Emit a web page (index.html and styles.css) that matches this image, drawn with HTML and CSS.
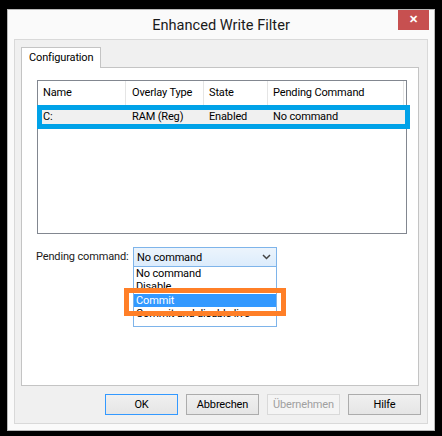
FILE: index.html
```html
<!DOCTYPE html>
<html>
<head>
    <meta charset="utf-8" />
    <title>Enhanced Write Filter</title>
    <link rel="stylesheet" href="styles.css">
</head>
<body>
    <div class="window">
        <div class="titlebar">
            <span></span>
            <span class="title">Enhanced Write Filter</span>
            <span class="close">&#x2715;</span>
        </div>
        <div class="panel">
            <div class="tabs">
                <span class="tab">Configuration</span>
            </div>
            <div class="tabpage">
                <div class="listview">
                    <div class="lv-head">
                        <span class="c1">Name</span>
                        <span class="c2">Overlay Type</span>
                        <span class="c3">State</span>
                        <span class="c4">Pending Command</span>
                    </div>
                    <div class="lv-row">
                        <span class="c1">C:</span>
                        <span class="c2">RAM (Reg)</span>
                        <span class="c3">Enabled</span>
                        <span class="c4">No command</span>
                    </div>
                    <!-- markierung -->
                    <div class="mark mark-blue"></div>
                </div>
                <div class="pending">
                    <span class="label">Pending command:</span>
                    <div class="combo-wrap">
                        <div class="combo">
                            <span>No command</span>
                            <svg class="chev" width="9" height="6" viewBox="0 0 9 6"><path d="M1 1 L4.5 4.5 L8 1" fill="none" stroke="#444" stroke-width="1.5"/></svg>
                        </div>
                        <ul class="droplist">
                            <li>No command</li>
                            <li>Disable</li>
                            <li class="sel">Commit</li>
                            <li>Commit and disable live</li>
                        </ul>
                        <div class="mark mark-orange"></div>
                    </div>
                </div>
            </div>
            <div class="buttons">
                <button class="btn default">OK</button>
                <button class="btn">Abbrechen</button>
                <button class="btn" disabled>Übernehmen</button>
                <button class="btn">Hilfe</button>
            </div>
        </div>
    </div>
</body>
</html>
```

FILE: styles.css
```css
body {
    margin: 0;
    padding: 9px 0 0 7px;
    background-color: #000;
    font-family: Roboto, "Noto Sans", Arial, sans-serif;
    font-size: 11px;
    letter-spacing: -0.15px;
    color: #000;
    white-space: nowrap;
}

.window {
    width: 428px;
    height: 422px;
    box-sizing: border-box;
    border: 1px solid #b9b9b9;
    background-color: #fafafa;
}

.titlebar {
    display: grid;
    grid-template-columns: 1fr auto 1fr;
    height: 29px;
}

.title {
    font-size: 14.6px;
    letter-spacing: 0;
    color: #1a1a1a;
    line-height: 29px;
    padding-top: 1px;
}

.close {
    justify-self: end;
    width: 31px;
    height: 20px;
    margin-right: 5px;
    background-color: #c75050;
    color: #fff;
    font-size: 11px;
    font-weight: bold;
    text-align: center;
    line-height: 20px;
}

.panel {
    margin-left: 6px;
    width: 414px;
    height: 385px;
    box-sizing: border-box;
    border: 1px solid #d9d9d9;
    background-color: #f0f0f0;
    padding: 7px 8px 0 6px;
}

.tabs {
    display: flex;
    height: 20px;
}

.tab {
    width: 80px;
    box-sizing: border-box;
    border: 1px solid #c4c4c4;
    border-bottom: none;
    background-color: #fff;
    padding-left: 7px;
    line-height: 19px;
    margin-bottom: -1px;
    position: relative;
}

.tabpage {
    width: 398px;
    height: 319px;
    box-sizing: border-box;
    border: 1px solid #c4c4c4;
    background-color: #fff;
    padding: 12px 0 0 15px;
}

.listview {
    position: relative;
    width: 370px;
    height: 154px;
    box-sizing: border-box;
    border: 1px solid #828790;
}

.lv-head, .lv-row {
    display: flex;
    height: 24px;
    line-height: 24px;
}

.lv-head span {
    border-right: 1px solid #e5e5e5;
}

.lv-head .c4 {
    width: 136px;
}

.lv-row {
    height: 17px;
    line-height: 17px;
    margin-top: 3px;
    background-color: #f0f0f0;
}

.c1 { width: 88px; box-sizing: border-box; padding-left: 5px; }
.c2 { width: 78px; box-sizing: border-box; padding-left: 6px; }
.c3 { width: 64px; box-sizing: border-box; padding-left: 5px; }
.c4 { width: 137px; box-sizing: border-box; padding-left: 5px; }

.mark {
    position: absolute;
    box-sizing: border-box;
}

.mark-blue {
    left: -1px;
    top: 24px;
    width: 373px;
    height: 24px;
    border: 5px solid #00a2e8;
}

.pending {
    display: flex;
    margin-top: 13px;
    margin-left: -1px;
}

.label {
    width: 97px;
    line-height: 20px;
    color: #1a1a1a;
}

.combo-wrap {
    position: relative;
    width: 144px;
}

.combo {
    display: flex;
    justify-content: space-between;
    align-items: center;
    height: 20px;
    box-sizing: border-box;
    border: 1px solid #7eb4ea;
    background: linear-gradient(#ecf4fc, #dcecfc);
    padding: 0 5px 0 3px;
}

.droplist {
    list-style: none;
    margin: 0;
    padding: 0;
    height: 60px;
    overflow: hidden;
    box-sizing: border-box;
    border: 1px solid #7eb4ea;
    border-top: none;
    background-color: #fff;
}

.droplist li {
    height: 13.4px;
    line-height: 13px;
    padding-left: 2px;
}

.droplist li.sel {
    background-color: #3399ff;
    color: #fff;
}

.mark-orange {
    left: -9px;
    top: 41px;
    width: 162px;
    height: 28px;
    border: 5px solid #ff7f27;
}

.buttons {
    display: flex;
    justify-content: flex-end;
    gap: 8px;
    margin-top: 8px;
    margin-right: -2px;
}

.btn {
    width: 73px;
    height: 21px;
    box-sizing: border-box;
    border: 1px solid #acacac;
    background: linear-gradient(#f0f0f0, #e5e5e5);
    font-family: inherit;
    font-size: 11px;
    letter-spacing: inherit;
    color: #000;
    padding: 0;
}

.btn.default {
    border-color: #3399ff;
}

.btn:disabled {
    border-color: #d9d9d9;
    background: #f4f4f4;
    color: #a0a0a0;
}
```
